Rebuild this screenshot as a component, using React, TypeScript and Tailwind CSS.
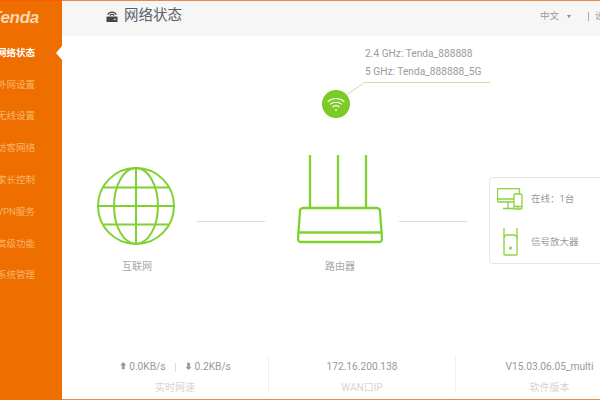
const menu = ["网络状态", "外网设置", "无线设置", "访客网络", "家长控制", "VPN服务", "高级功能", "系统管理"];

function Globe() {
  return (
    <svg width="80" height="80" viewBox="0 0 80 80" fill="none" stroke="#7fd12f" strokeWidth="2">
      <circle cx="40" cy="40" r="38" />
      <ellipse cx="40" cy="40" rx="22" ry="38" />
      <path d="M40 2v76M2 40h76M8 21.500h64M8 58.500h64" />
    </svg>
  );
}

function Router() {
  return (
    <svg width="86" height="89" viewBox="0 0 86 89" fill="none" stroke="#7fd12f" strokeWidth="2.300" strokeLinejoin="round">
      <path d="M13 0v53M41 0v53M69 0v53" />
      <path d="M6 53h74a3 3 0 0 1 3 3l2 28a3 3 0 0 1-3 3H4a3 3 0 0 1-3-3l2-28a3 3 0 0 1 3-3z" />
      <path d="M2 77.500h82" />
    </svg>
  );
}

function Devices() {
  return (
    <svg width="26" height="22" viewBox="0 0 26 22" fill="none" stroke="#8bd33e" strokeWidth="1.300">
      <path d="M17 14H1.500a1 1 0 0 1-1-1V1.500a1 1 0 0 1 1-1h20a1 1 0 0 1 1 1V6" />
      <path d="M1 11h16M11 14v6M6 20.500h11" />
      <rect x="17" y="6" width="8" height="15" rx="1" />
      <path d="M17 18.500h8M21 18.500v2.500" />
    </svg>
  );
}

function Extender() {
  return (
    <svg width="15" height="28" viewBox="0 0 15 28" fill="none" stroke="#8bd33e" strokeWidth="1.300">
      <path d="M1 0v10M14 0v10" />
      <path d="M1 9l2-2h9l2 2v17a1 1 0 0 1-1 1H2a1 1 0 0 1-1-1z" />
      <circle cx="7.500" cy="20" r="1.500" fill="#8bd33e" stroke="none" />
    </svg>
  );
}

function Wifi() {
  return (
    <svg width="18" height="16" viewBox="0 0 18 16" fill="none" stroke="#ffffff" strokeWidth="1.100" strokeLinecap="round">
      <path d="M1 5.500C5.500 1.500 12.500 1.500 17 5.500" />
      <path d="M3.500 8.200C6.500 5.500 11.500 5.500 14.500 8.200" />
      <path d="M6 10.800C7.800 9.400 10.200 9.400 12 10.800" />
      <circle cx="9" cy="14" r="1" fill="#ffffff" stroke="none" />
    </svg>
  );
}

function Stat({ label, children, divider }: { label: string; children: React.ReactNode; divider?: boolean }) {
  return (
    <div className={`w-[187px] shrink-0 h-[37px] pt-[4px] flex flex-col items-center gap-[8px] ${divider ? "border-r border-[#f0f0f0]" : ""}`}>
      <div className="h-[14px] text-[10.2px] leading-[14px] text-[#999] whitespace-nowrap flex items-center">{children}</div>
      <div className="text-[10px] leading-[12px] text-[#d4d4d4] whitespace-nowrap">{label}</div>
    </div>
  );
}

export default function App() {
  return (
    <div className="w-[600px] h-[400px] overflow-hidden flex bg-white font-['Roboto','Noto_Sans_CJK_SC',sans-serif]">
      <aside className="w-[62px] shrink-0 h-full bg-[#ee6e00] flex flex-col border-t border-[#ff5a00] overflow-hidden">
        <div className="h-[36px] -ml-[9px] flex items-center pb-[4px]">
          <span className="text-[17px] font-bold italic text-[#fbd9b5] leading-none font-['Liberation_Sans',sans-serif] tracking-[-0.3px]">Tenda</span>
        </div>
        <nav className="flex flex-col">
          {menu.map((m, i) => (
            <div key={m} className={`relative h-[31.8px] -ml-[3px] flex items-center justify-start whitespace-nowrap text-[9.500px] ${i === 0 ? "font-bold text-white" : "text-[#fbb56c]"}`}>
              {m}
              {i === 0 && (
                <span className="absolute right-0 top-[9px] w-0 h-0 border-y-[7px] border-y-transparent border-r-[6px] border-r-white" />
              )}
            </div>
          ))}
        </nav>
      </aside>

      <main className="relative flex-1 min-w-0 h-full flex flex-col border-t border-b border-[#e98a4c] overflow-hidden">
        <header className="h-[35px] shrink-0 bg-[#f6f6f6] flex items-center pl-[44px] pb-[5px] whitespace-nowrap">
          <svg width="12" height="12" viewBox="0 0 12 12" className="mr-[6px] shrink-0">
            <path d="M1.800 4.800C3.500 1.200 8.500 1.200 10.200 4.800" fill="none" stroke="#444" strokeWidth="1.300" />
            <path d="M3.800 5.500C4.800 3.900 7.200 3.900 8.200 5.500" fill="none" stroke="#444" strokeWidth="1.200" />
            <rect x="0.500" y="6.500" width="11" height="5.500" rx="0.500" fill="#444" />
            <rect x="7.500" y="8.800" width="2.500" height="1" fill="#ddd" />
          </svg>
          <span className="text-[14.5px] text-[#5b6068]">网络状态</span>
          <span className="ml-[358px] text-[9.500px] text-[#999]">中文</span>
          <span className="ml-[8px] w-0 h-0 border-x-[2.500px] border-x-transparent border-t-[3px] border-t-[#888]" />
          <span className="ml-[17px] w-px h-[9px] bg-[#aaa] shrink-0" />
          <span className="ml-[6px] text-[9.500px] text-[#999]">设置</span>
        </header>

        <section className="h-[83px] shrink-0 flex pl-[303px] relative">
          <svg width="20" height="14" viewBox="0 0 20 14" fill="none" stroke="#c3e19a" className="absolute left-[283px] top-[46px]">
            <path d="M0 14L19.500 0.500" />
          </svg>
          <div className="absolute left-[260px] top-[54px] w-[28px] h-[28px] bg-[#7ccb24] rounded-full flex items-center justify-center">
            <Wifi />
          </div>
          <div className="w-[125px] h-[47px] border-b border-[#c3e19a] pt-[9px] text-[10.2px] leading-[18px] text-[#9b9b9b] whitespace-nowrap">
            <div>2.4 GHz: Tenda_888888</div>
            <div>5 GHz: Tenda_888888_5G</div>
          </div>
        </section>

        <section className="flex-1 min-h-0 flex items-start pt-[36px] pl-[34px]">
          <div className="w-[80px] shrink-0 flex flex-col items-center pt-[11px]">
            <Globe />
            <div className="mt-[14px] ml-[2px] text-[10px] leading-[14px] text-[#a8a8a8]">互联网</div>
          </div>
          <div className="ml-[21px] mt-[66px] w-[68px] h-px bg-[#d9d9d9] shrink-0" />
          <div className="ml-[32px] w-[86px] shrink-0 flex flex-col items-center">
            <Router />
            <div className="mt-[16px] text-[10px] leading-[14px] text-[#a8a8a8]">路由器</div>
          </div>
          <div className="ml-[16px] mt-[66px] w-[68px] h-px bg-[#d9d9d9] shrink-0" />
          <div className="ml-[22px] mt-[22px] w-[140px] h-[87px] shrink-0 border border-[#e6e6e6] rounded-[4px] pl-[7px] pt-[10px] flex flex-col gap-[18px]">
            <div className="flex items-center h-[22px]">
              <Devices />
              <span className="ml-[8px] text-[9.500px] text-[#999]">在线：1台</span>
            </div>
            <div className="flex items-center h-[28px]">
              <span className="w-[26px] flex justify-center"><Extender /></span>
              <span className="ml-[8px] text-[9.500px] text-[#999]">信号放大器</span>
            </div>
          </div>
        </section>

        <footer className="h-[43px] shrink-0 flex pl-[20px]">
          <Stat label="实时网速" divider>
            <span className="text-[8px] mr-[2px]">⬆</span>0.0KB/s
            <span className="mx-[9px] w-px h-[9px] bg-[#ddd]" />
            <span className="text-[8px] mr-[2px]">⬇</span>0.2KB/s
          </Stat>
          <Stat label="WAN口IP" divider>172.16.200.138</Stat>
          <Stat label="软件版本">V15.03.06.05_multi</Stat>
        </footer>
      </main>
    </div>
  );
}
